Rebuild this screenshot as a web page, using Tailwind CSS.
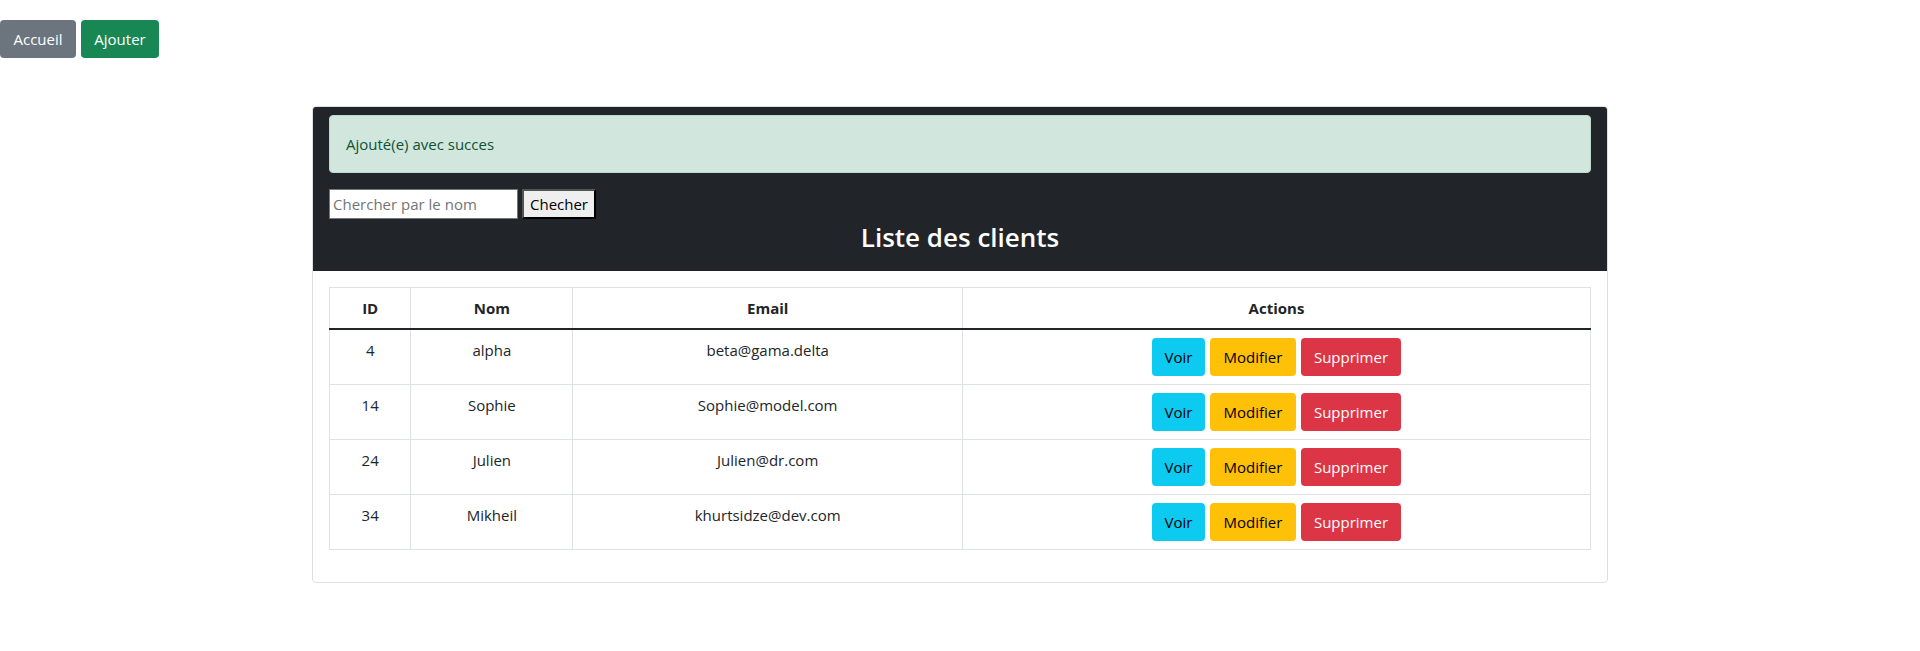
<!DOCTYPE html>
<html lang="fr">
<head>
<meta charset="utf-8">
<meta name="viewport" content="width=device-width, initial-scale=1">
<title>Liste des clients</title>
<script src="https://cdn.jsdelivr.net/npm/@tailwindcss/browser@4"></script>
</head>
<body class="bg-white font-['Segoe_UI','Open_Sans',sans-serif] text-[15px] leading-6 text-[#212529]">
<nav class="flex gap-[5px] pt-5">
  <a href="#" class="w-19 rounded bg-[#6c757d] py-[7px] text-center text-white">Accueil</a>
  <a href="#" class="w-[78px] rounded bg-[#198754] py-[7px] text-center text-white">Ajouter</a>
</nav>
<main class="mx-auto mt-12 max-w-[1320px] px-3">
  <section class="rounded border border-[#dfdfdf] bg-white">
    <header class="rounded-t-[3px] border-b border-[#1d2024] bg-[#212529] px-4 py-2">
      <div role="alert" class="mb-4 rounded border border-[#badbcc] bg-[#d1e7dd] p-4 text-[#0f5132]">Ajouté(e) avec succes</div>
      <form class="flex gap-1">
        <input type="text" aria-label="Chercher par le nom" placeholder="Chercher par le nom" class="h-[30px] w-[189px] border border-[#767676] bg-white px-[3px] text-black placeholder:text-[#757575]">
        <button type="button" class="h-[30px] w-[74px] border-2 border-black bg-[#efefef] text-center text-black [border-style:outset]">Checher</button>
      </form>
      <h3 class="mb-2 pt-px text-center text-[26px] leading-[34px] font-semibold text-white">Liste des clients</h3>
    </header>
    <div class="p-4">
      <table class="mb-4 w-full table-fixed border-collapse text-center align-top">
        <colgroup><col class="w-[6.45%]"><col class="w-[12.85%]"><col class="w-[30.9%]"><col></colgroup>
        <thead>
          <tr class="border-b-2 border-b-[#212529]">
            <th scope="col" class="border-x border-t border-[#dee2e6] p-2 font-bold">ID</th>
            <th scope="col" class="border-x border-t border-[#dee2e6] p-2 font-bold">Nom</th>
            <th scope="col" class="border-x border-t border-[#dee2e6] p-2 font-bold">Email</th>
            <th scope="col" class="border-x border-t border-[#dee2e6] p-2 font-bold">Actions</th>
          </tr>
        </thead>
        <tbody id="clients" class="align-top"></tbody>
      </table>
    </div>
  </section>
</main>
<template id="row">
  <tr>
    <td class="border-x border-b border-[#dee2e6] p-2"></td>
    <td class="border-x border-b border-[#dee2e6] p-2"></td>
    <td class="border-x border-b border-[#dee2e6] p-2"></td>
    <td class="border-x border-b border-[#dee2e6] p-2">
      <div class="flex justify-center gap-[5px]">
        <a href="#" class="w-[53px] rounded bg-[#0dcaf0] py-[7px] text-black">Voir</a>
        <a href="#" class="w-[86px] rounded bg-[#ffc107] py-[7px] text-black">Modifier</a>
        <a href="#" class="w-[100px] rounded bg-[#dc3545] py-[7px] text-white">Supprimer</a>
      </div>
    </td>
  </tr>
</template>
<script>
const clients = [
  ['4', 'alpha', 'beta@gama.delta'],
  ['14', 'Sophie', 'Sophie@model.com'],
  ['24', 'Julien', 'Julien@dr.com'],
  ['34', 'Mikheil', 'khurtsidze@dev.com'],
];
const body = document.getElementById('clients');
for (const client of clients) {
  const row = document.getElementById('row').content.cloneNode(true);
  const cells = row.querySelectorAll('td');
  client.forEach((value, i) => { cells[i].textContent = value; });
  body.append(row);
}
</script>
</body>
</html>
